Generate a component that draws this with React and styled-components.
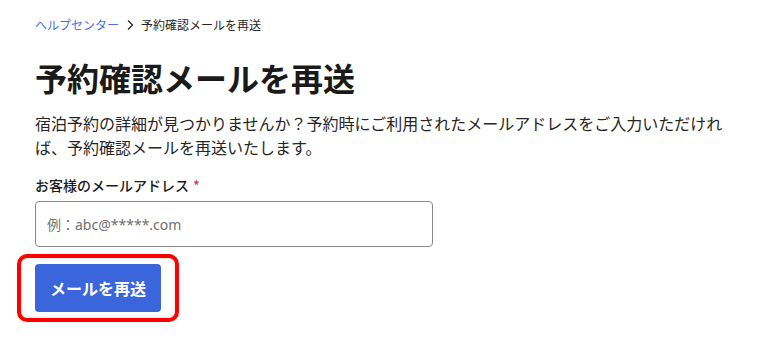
import React, { useState } from 'react'
import styled, { createGlobalStyle } from 'styled-components'

const GlobalStyle = createGlobalStyle`
  body {
    margin: 0;
    background: #ffffff;
    font-family: "Noto Sans CJK JP", "Noto Sans", sans-serif;
    color: #1a1a1a;
  }
`

const Page = styled.div`
  padding: 15px 35px 0 35px;
  max-width: 700px;
`

const Breadcrumb = styled.nav`
  display: flex;
  align-items: center;
  gap: 5px;
  font-size: 12px;
  line-height: 20px;
  color: #262626;
`

const Crumb = styled.a`
  color: #4b6fe0;
  text-decoration: none;
`

const Title = styled.h1`
  margin: 22px 0 0;
  font-size: 32px;
  font-weight: 700;
  line-height: 40px;
  color: #1a1a1a;
`

const Lead = styled.p`
  margin: 14px 0 0;
  font-size: 16px;
  line-height: 24px;
  color: #262626;
`

const Label = styled.label`
  display: block;
  margin-top: 16px;
  font-size: 14px;
  font-weight: 500;
  line-height: 20px;
  color: #1a1a1a;
`

const Required = styled.span`
  color: #c8404f;
  margin-left: 4px;
`

const Input = styled.input`
  display: block;
  box-sizing: border-box;
  margin-top: 6px;
  width: 398px;
  height: 46px;
  padding: 0 11px;
  border: 1px solid #8a8a8a;
  border-radius: 4px;
  font-family: "Noto Sans", "Noto Sans CJK JP", sans-serif;
  font-size: 14px;
  color: #262626;
  outline: none;
  &::placeholder {
    color: #707070;
  }
`

const Highlight = styled.div`
  display: inline-block;
  margin: 7px 0 0 -18px;
  padding: 6px 14px;
  border: 4px solid #ff0000;
  border-radius: 10px;
  box-shadow: inset 0 0 4px rgba(0, 0, 0, 0.15);
`

const Button = styled.button`
  display: block;
  width: 126px;
  height: 48px;
  border: none;
  border-radius: 4px;
  background: #3b66db;
  color: #ffffff;
  font-family: "Noto Sans CJK JP", "Noto Sans", sans-serif;
  font-size: 16px;
  font-weight: 700;
  cursor: pointer;
`

function Chevron() {
  return (
    <svg width="12" height="12" viewBox="0 0 12 12">
      <path d="M4 1.5 L8.5 6 L4 10.5" fill="none" stroke="#262626" strokeWidth="1.3" />
    </svg>
  )
}

export default function App() {
  const [email, setEmail] = useState('')
  return (
    <>
      <GlobalStyle />
      <Page>
        <Breadcrumb>
          <Crumb href="#">ヘルプセンター</Crumb>
          <Chevron />
          <span>予約確認メールを再送</span>
        </Breadcrumb>
        <Title>予約確認メールを再送</Title>
        <Lead>
          宿泊予約の詳細が見つかりませんか？予約時にご利用されたメールアドレスをご入力いただければ、予約確認メールを再送いたします。
        </Lead>
        <Label htmlFor="email">
          お客様のメールアドレス<Required>*</Required>
        </Label>
        <Input
          id="email"
          value={email}
          onChange={e => setEmail(e.target.value)}
          placeholder="例：abc@*****.com"
        />
        <Highlight>
          <Button>メールを再送</Button>
        </Highlight>
      </Page>
    </>
  )
}
